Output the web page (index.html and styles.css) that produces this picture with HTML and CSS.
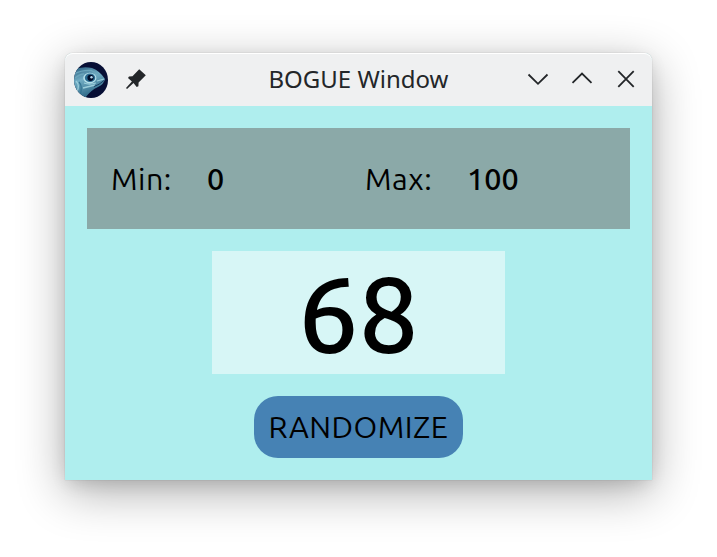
FILE: index.html
```
<!DOCTYPE html>
<html lang="en">
<head>
<meta charset="utf-8">
<title>BOGUE Window</title>
<link rel="stylesheet" href="styles.css">
</head>
<body>
<main class="window">
  <header class="titlebar">
    <svg class="app-icon" viewBox="0 0 34 36">
      <defs>
        <clipPath id="disc"><ellipse cx="17" cy="18" rx="17" ry="18"/></clipPath>
        <linearGradient id="skin" x1="0" y1="0" x2=".4" y2="1">
          <stop offset="0" stop-color="#24587a"/><stop offset=".45" stop-color="#72adc4"/><stop offset="1" stop-color="#2c6785"/>
        </linearGradient>
        <filter id="soft"><feGaussianBlur stdDeviation=".5"/></filter>
      </defs>
      <g clip-path="url(#disc)">
        <rect width="34" height="36" fill="#070f35"/>
        <g filter="url(#soft)">
          <path d="M-2 8Q8 4 18 6Q26 9 31 17Q30 22 24 25Q17 28 11 36H-2Z" fill="url(#skin)"/>
          <path d="M0 12Q8 8 17 8.5L27 13.5M1 16Q6 12 10 12" fill="none" stroke="#6ba5bb" stroke-width="1.3"/>
          <path d="M5 20Q9 24 6 34" fill="none" stroke="#347492" stroke-width="1.3"/>
          <path d="M2 19Q6 23 3 30M9 26L21 23M23 19L30 17M10 21Q15 23 22 21" fill="none" stroke="#9ccedb" stroke-width="1.3"/>
          <path d="M20 24.5Q25 23 30 18.5" fill="none" stroke="#173b60"/>
          <ellipse cx="15.8" cy="16" rx="6.6" ry="5.2" fill="#b4dfe9"/>
          <ellipse cx="16" cy="15.8" rx="5.2" ry="4.3" fill="#28688e"/>
          <circle cx="16.5" cy="15.8" r="3.1" fill="#050d29"/>
          <circle cx="17.5" cy="15.2" r="1.2" fill="#b7dcef"/>
        </g>
      </g>
    </svg>
    <svg class="pin" viewBox="0 0 20 20">
      <path d="M13.2.2L19.8 6.3L12.6 13.5L12.4 17.2L10.7 18L7.5 14.1L1 20L0 19L5.9 12.5L2 9.1L3 7.5L6.5 7.3Z" fill="#232629"/>
    </svg>
    <h1 class="title">BOGUE Window</h1>
    <div class="controls">
      <svg class="control" viewBox="0 0 22 22"><path d="M1.5 6.5L11 15.8L20.5 6.5"/></svg>
      <svg class="control" viewBox="0 0 22 22"><path d="M1.5 14.8L11 5.5L20.5 14.8"/></svg>
      <svg class="control" viewBox="0 0 22 22"><path d="M3.3 3.2L18.7 18.8M18.7 3.2L3.3 18.8"/></svg>
    </div>
  </header>
  <section class="content">
    <div class="range">
      <div class="field"><span class="label label-min">Min:</span><span class="value">0</span></div>
      <div class="field"><span class="label label-max">Max:</span><span class="value">100</span></div>
    </div>
    <output class="result">68</output>
    <button class="randomize">RANDOMIZE</button>
  </section>
</main>
</body>
</html>
```
FILE: styles.css
```
* { box-sizing: border-box; }
body {
  margin: 0;
  height: 557px;
  padding: 53px 65px 77px;
  background: #fff;
  color: #000;
  overflow: hidden;
  font-family: Ubuntu, "Noto Sans", sans-serif;
}
.window {
  width: 587px;
  height: 427px;
  border-radius: 8px 8px 0 0;
  background: #afeeee;
  box-shadow: 0 0 1px rgba(0,0,0,.35), 0 12px 48px rgba(0,0,0,.32), 0 5px 18px -3px rgba(0,0,0,.14);
}
.titlebar {
  height: 53px;
  display: grid;
  grid-template-columns: 34px 20px 1fr 110px;
  align-items: center;
  padding: 0 15px 0 9px;
  border-radius: 8px 8px 0 0;
  background: #eff0f1;
  box-shadow: inset 0 1px #fff;
}
.app-icon { width: 34px; height: 36px; }
.pin { width: 20px; height: 20px; margin-left: 18px; margin-top: -2px; }
.title {
  margin: -2px 0 0;
  padding-left: 140.5px;
  color: #232629;
  font: 400 24px/32px "Noto Sans", sans-serif;
  white-space: nowrap;
}
.controls { display: flex; gap: 22px; margin-top: -2px; }
.control {
  width: 22px;
  height: 22px;
  fill: none;
  stroke: #232629;
  stroke-width: 1.8;
}
.content {
  height: 374px;
  padding: 22px;
  display: flex;
  flex-direction: column;
  align-items: center;
  gap: 22px;
}
.range {
  width: 543px;
  height: 101px;
  display: grid;
  grid-template-columns: 254px 1fr;
  align-items: center;
  padding-left: 24px;
  background: #8ba9a8;
  font-size: 30.5px;
  line-height: 40px;
}
.field { display: flex; }
.label { font-weight: 420; letter-spacing: .5px; }
.label-min { width: 96px; }
.label-max { width: 102px; }
.value { font-weight: 480; }
.result {
  width: 293px;
  height: 123px;
  display: flex;
  align-items: center;
  justify-content: center;
  background: #d7f6f6;
  font-size: 107px;
  font-weight: 490;
  line-height: 123px;
}
.randomize {
  width: 209px;
  height: 62px;
  padding: 0;
  border: 0;
  border-radius: 24px;
  background: #4682b4;
  color: #000;
  font: 440 30.5px/40px Ubuntu, "Noto Sans", sans-serif;
  letter-spacing: .5px;
  white-space: nowrap;
}
```
